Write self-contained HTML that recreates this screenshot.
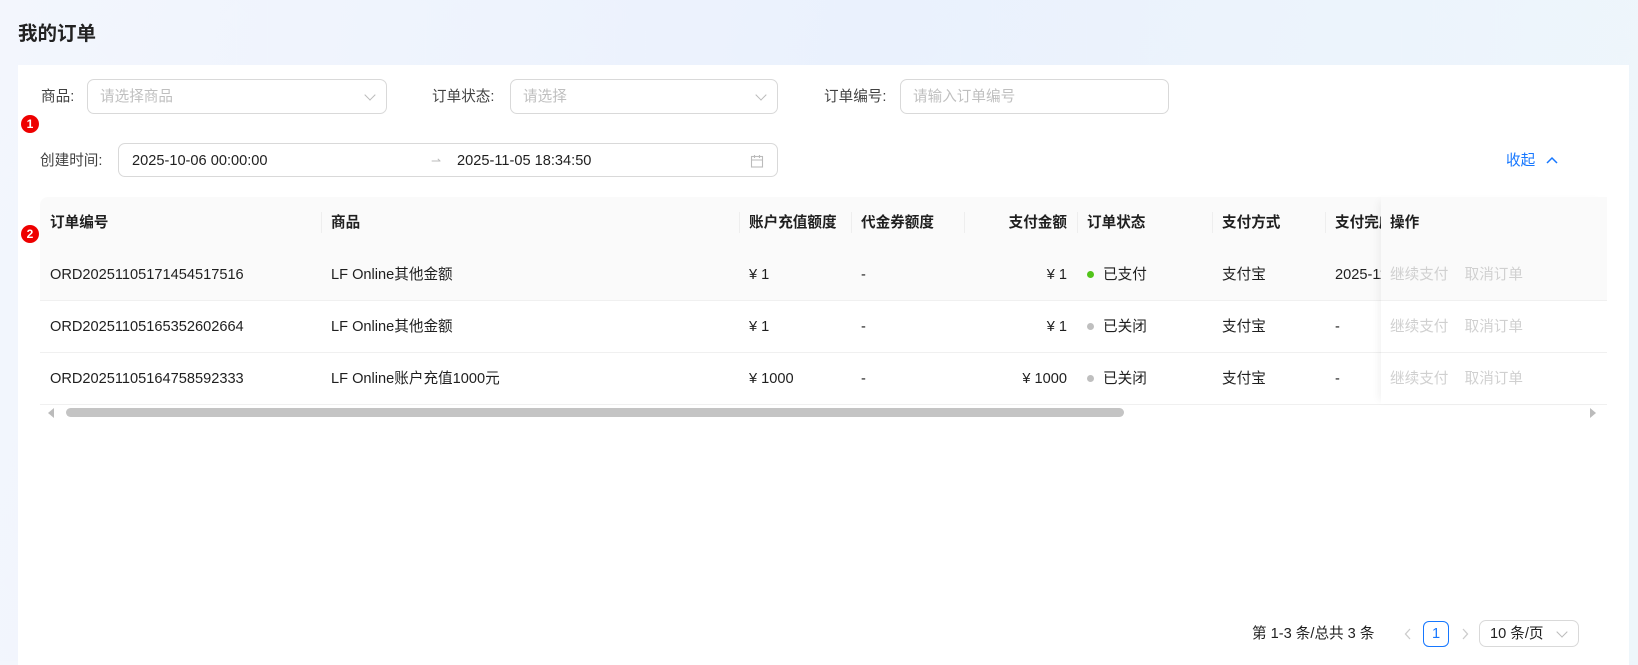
<!DOCTYPE html>
<html><head><meta charset="utf-8"><style>
*{box-sizing:border-box;margin:0;padding:0}
body{width:1638px;height:661px;overflow:hidden;font-family:"Liberation Sans","Noto Sans CJK SC",sans-serif;font-size:14.6px;line-height:20px;color:rgba(0,0,0,.88);background:linear-gradient(100deg,#f3f6fd 0%,#eaf1fd 50%,#eef6fb 100%);position:relative}
.abs{position:absolute}
.title{left:18px;top:21px;font-size:19.5px;font-weight:bold;color:#222;line-height:26px}
.panel{left:18px;top:65px;width:1611px;height:600px;background:#fff}
.lbl{color:rgba(0,0,0,.75)}
.inp{border:1px solid #d9d9d9;border-radius:7px;background:#fff;color:#bfbfbf;padding:0 12px;display:flex;align-items:center}
.chev{position:absolute;right:12px;top:50%;width:8px;height:8px;border-right:1.3px solid #bbb;border-bottom:1.3px solid #bbb;transform:translateY(-75%) rotate(45deg)}
.badge{width:18px;height:18px;border-radius:50%;background:#e00;color:#fff;font-size:12px;font-weight:bold;text-align:center;line-height:18px}
table{border-collapse:collapse;table-layout:fixed}
.tbl{left:40px;top:197px;width:1567px;overflow:hidden;border-radius:8px 8px 0 0}
th{background:#fafafa;height:51px;text-align:left;font-weight:bold;padding:0 10px;position:relative;white-space:nowrap;overflow:hidden;vertical-align:middle}
th.sep:before{content:"";position:absolute;left:0;top:15px;height:21px;border-left:1px solid #eee}
td{height:52px;padding:2px 10px 0;border-bottom:1px solid #f0f0f0;white-space:nowrap;overflow:hidden;vertical-align:middle}
td span,td{line-height:20px}
tr.h td{background:#fafafa}
.r{text-align:right}
.dot{display:inline-block;width:7px;height:7px;border-radius:50%;margin-right:9px;vertical-align:1px}
.fix{left:1381px;top:197px;width:226px;background:#fff;box-shadow:-6px 0 8px -4px rgba(0,0,0,.06)}
.dis{color:#d0d0d0}
</style></head><body>
<div class="abs title">我的订单</div>
<div class="abs panel"></div>

<div class="abs lbl" style="left:41px;top:87px">商品:</div>
<div class="abs inp" style="left:87px;top:79px;width:300px;height:35px">请选择商品<span class="chev"></span></div>
<div class="abs lbl" style="left:432px;top:87px">订单状态:</div>
<div class="abs inp" style="left:510px;top:79px;width:268px;height:35px">请选择<span class="chev"></span></div>
<div class="abs lbl" style="left:824px;top:87px">订单编号:</div>
<div class="abs inp" style="left:900px;top:79px;width:269px;height:35px">请输入订单编号</div>

<div class="abs badge" style="left:21px;top:115px">1</div>
<div class="abs badge" style="left:21px;top:225px">2</div>

<div class="abs lbl" style="left:40px;top:151px">创建时间:</div>
<div class="abs inp" style="left:118px;top:143px;width:660px;height:34px;color:rgba(0,0,0,.88)">
<span style="position:absolute;left:13px;top:7px">2025-10-06 00:00:00</span>
<span style="position:absolute;left:312px;top:7px;color:#bbb;font-size:12px">⇀</span>
<span style="position:absolute;left:338px;top:7px">2025-11-05 18:34:50</span>
<svg style="position:absolute;right:13px;top:10px" width="14" height="14" viewBox="0 0 14 14" fill="none" stroke="#bbb" stroke-width="1.1"><rect x="1.5" y="2.5" width="11" height="10.5"/><path d="M1.5 6h11M4.5 1v3M9.5 1v3"/></svg>
</div>
<div class="abs" style="left:1506px;top:151px;color:#1677ff">收起 <svg width="14" height="10" viewBox="0 0 14 10" style="margin-left:6px"><path d="M2 8l5-5 5 5" fill="none" stroke="#1677ff" stroke-width="1.5"/></svg></div>

<div class="abs tbl">
<table style="width:1567px">
<colgroup><col style="width:281px"><col style="width:418px"><col style="width:112px"><col style="width:113px"><col style="width:113px"><col style="width:135px"><col style="width:113px"><col style="width:282px"></colgroup>
<tr><th>订单编号</th><th class="sep">商品</th><th class="sep">账户充值额度</th><th class="sep">代金券额度</th><th class="sep r">支付金额</th><th class="sep">订单状态</th><th class="sep">支付方式</th><th class="sep">支付完成时间</th></tr>
<tr class="h"><td>ORD20251105171454517516</td><td>LF Online其他金额</td><td>¥ 1</td><td>-</td><td class="r">¥ 1</td><td><span class="dot" style="background:#52c41a"></span>已支付</td><td>支付宝</td><td>2025-11-05 17:15:02</td></tr>
<tr><td>ORD20251105165352602664</td><td>LF Online其他金额</td><td>¥ 1</td><td>-</td><td class="r">¥ 1</td><td><span class="dot" style="background:#bfbfbf"></span>已关闭</td><td>支付宝</td><td>-</td></tr>
<tr><td>ORD20251105164758592333</td><td>LF Online账户充值1000元</td><td>¥ 1000</td><td>-</td><td class="r">¥ 1000</td><td><span class="dot" style="background:#bfbfbf"></span>已关闭</td><td>支付宝</td><td>-</td></tr>
</table>
</div>
<div class="abs fix">
<table style="width:226px">
<tr><th style="padding-left:9px">操作</th></tr>
<tr class="h"><td style="padding-left:9px" class="dis">继续支付&nbsp;&nbsp;&nbsp;&nbsp;取消订单</td></tr>
<tr><td style="padding-left:9px" class="dis">继续支付&nbsp;&nbsp;&nbsp;&nbsp;取消订单</td></tr>
<tr><td style="padding-left:9px;border-bottom:none" class="dis">继续支付&nbsp;&nbsp;&nbsp;&nbsp;取消订单</td></tr>
</table>
</div>

<div class="abs" style="left:48px;top:408px;width:0;height:0;border-top:5px solid transparent;border-bottom:5px solid transparent;border-right:6px solid #bbb"></div>
<div class="abs" style="left:66px;top:408px;width:1058px;height:9px;border-radius:5px;background:#c4c4c4"></div>
<div class="abs" style="left:1590px;top:408px;width:0;height:0;border-top:5px solid transparent;border-bottom:5px solid transparent;border-left:6px solid #bbb"></div>

<div class="abs" style="left:1252px;top:624px">第 1-3 条/总共 3 条</div>
<svg class="abs" style="left:1404px;top:628px" width="8" height="12" viewBox="0 0 8 12"><path d="M6 1L1.5 6 6 11" fill="none" stroke="#ccc" stroke-width="1.3"/></svg>
<div class="abs" style="left:1423px;top:621px;width:26px;height:26px;border:1px solid #1677ff;border-radius:6px;color:#1677ff;text-align:center;line-height:24px">1</div>
<svg class="abs" style="left:1461px;top:628px" width="8" height="12" viewBox="0 0 8 12"><path d="M2 1l4.5 5L2 11" fill="none" stroke="#ccc" stroke-width="1.3"/></svg>
<div class="abs inp" style="left:1479px;top:620px;width:100px;height:27px;color:rgba(0,0,0,.88);padding-left:10px">10 条/页<span class="chev"></span></div>
</body></html>
